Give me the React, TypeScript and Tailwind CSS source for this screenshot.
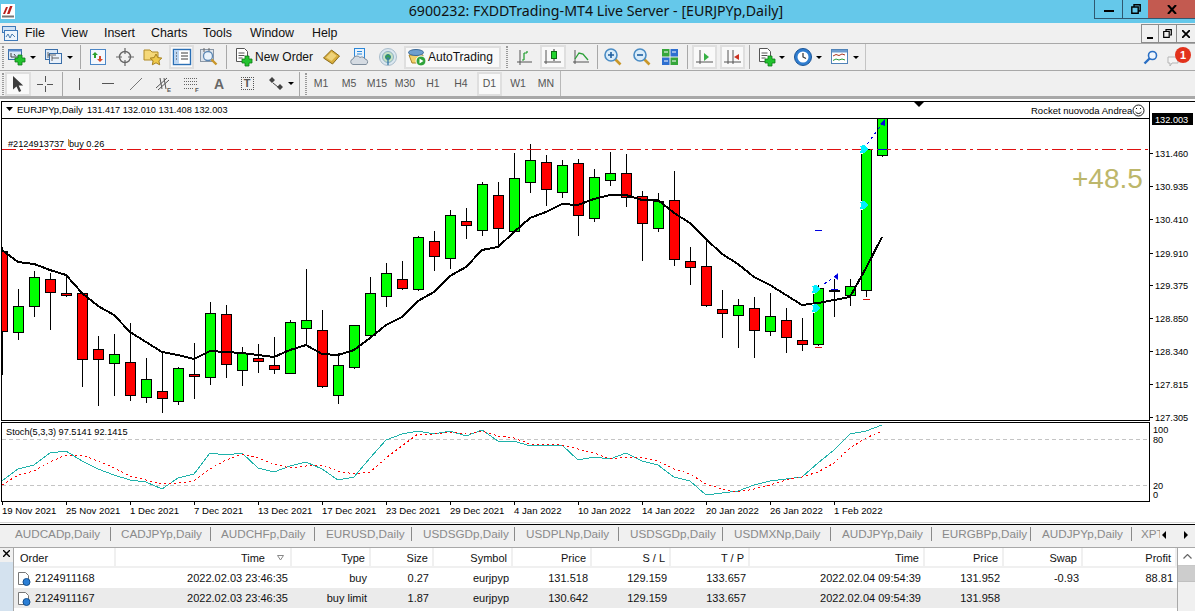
import type { ReactNode } from "react";

type Candle = [number, number, number, number, "g" | "r"];

// hi, body top, body bottom, lo
const candles: Candle[] = [
  [247, 251, 331, 375, "r"], [289, 306, 332, 340, "g"], [271, 277, 306, 317, "g"], [273, 279, 292, 330, "r"],
  [275, 293, 295, 297, "r"], [293, 293, 359, 387, "r"], [336, 349, 359, 406, "r"], [334, 354, 363, 396, "g"],
  [323, 362, 395, 401, "r"], [358, 379, 397, 403, "g"], [352, 391, 398, 413, "r"], [367, 368, 401, 405, "g"],
  [343, 374, 376, 399, "r"], [302, 313, 377, 385, "g"], [305, 314, 364, 378, "r"], [347, 353, 370, 386, "g"],
  [344, 358, 361, 373, "r"], [337, 365, 369, 374, "r"], [320, 322, 373, 374, "g"], [269, 320, 328, 345, "g"],
  [310, 330, 386, 388, "r"], [353, 365, 395, 404, "g"], [325, 325, 367, 369, "g"], [277, 293, 335, 335, "g"],
  [263, 273, 296, 307, "g"], [261, 279, 288, 290, "r"], [236, 237, 289, 291, "g"], [231, 241, 256, 271, "r"],
  [210, 215, 258, 269, "g"], [208, 221, 225, 239, "r"], [182, 184, 230, 236, "g"], [182, 195, 228, 247, "r"],
  [153, 178, 231, 231, "g"], [144, 160, 182, 193, "g"], [155, 162, 189, 206, "r"], [160, 165, 192, 198, "g"],
  [159, 163, 215, 236, "r"], [169, 177, 218, 222, "g"], [152, 173, 180, 186, "g"], [154, 173, 197, 207, "r"],
  [191, 196, 223, 261, "r"], [193, 201, 228, 232, "g"], [171, 200, 259, 266, "r"], [247, 261, 267, 285, "r"],
  [240, 266, 305, 307, "r"], [290, 309, 313, 338, "r"], [299, 305, 315, 348, "g"], [297, 308, 330, 358, "r"],
  [293, 316, 331, 336, "g"], [308, 320, 337, 353, "r"], [318, 340, 344, 351, "r"], [285, 288, 344, 346, "g"],
  [279, 290, 291, 317, "r"], [279, 286, 295, 306, "g"], [149, 149, 290, 297, "g"], [118, 118, 155, 157, "g"],
];

const maLine =
  "2,250 18,262 34,264 50,270 66,275 82,293 98,306 114,315 130,332 146,342 162,352 178,355 194,359 210,351 226,352 242,353 258,355 274,357 290,350 306,345 322,354 338,355 354,350 370,338 386,325 402,317 418,301 434,292 450,276 466,267 482,250 498,247 514,232 530,218 546,212 562,204 578,205 594,199 610,195 626,195 642,200 658,200 674,213 690,223 706,239 722,254 738,264 754,277 770,285 786,295 802,305 818,303 834,300 850,297 866,268 882,237";

const stochMain =
  "2,481 18,469 34,465 50,453 66,451 82,461 98,469 114,475 130,480 146,482 162,489 178,478 194,474 210,453 226,455 242,453 258,468 274,472 290,466 306,462 322,469 338,480 354,477 370,458 386,440 402,434 418,431 434,434 450,431 466,436 482,430 498,441 514,441 530,446 546,445 562,445 578,460 594,457 610,459 626,453 642,461 658,465 674,477 690,481 706,495 722,493 738,491 754,485 770,481 786,479 802,477 818,463 834,450 850,434 866,431 882,425";

const stochSignal =
  "2,485 18,475 34,471 50,462 66,455 82,455 98,461 114,468 130,476 146,480 162,484 178,483 194,481 210,469 226,460 242,454 258,458 274,464 290,468 306,466 322,465 338,471 354,474 370,472 386,458 402,446 418,434 434,434 450,432 466,434 482,431 498,436 514,438 530,444 546,444 562,445 578,449 594,453 610,459 626,457 642,458 658,461 674,469 690,474 706,484 722,489 738,492 754,489 770,485 786,480 802,477 818,472 834,463 850,448 866,438 882,431";

const priceLabels: [string, number][] = [
  ["131.460", 153], ["130.935", 186], ["130.410", 219], ["129.910", 253], ["129.375", 285],
  ["128.850", 318], ["128.340", 351], ["127.815", 384], ["127.305", 417],
];

const dateLabels = [
  "19 Nov 2021", "25 Nov 2021", "1 Dec 2021", "7 Dec 2021", "13 Dec 2021", "17 Dec 2021", "23 Dec 2021",
  "29 Dec 2021", "4 Jan 2022", "10 Jan 2022", "14 Jan 2022", "20 Jan 2022", "26 Jan 2022", "1 Feb 2022",
];

const tabs = [
  { name: "AUDCADp,Daily", cls: "w-[111px] pl-[15px]" },
  { name: "CADJPYp,Daily", cls: "w-[100px] pl-[10px]" },
  { name: "AUDCHFp,Daily", cls: "w-[104px] pl-[10px]" },
  { name: "EURUSD,Daily", cls: "w-[97px] pl-[11px]" },
  { name: "USDSGDp,Daily", cls: "w-[103px] pl-[11px]" },
  { name: "USDPLNp,Daily", cls: "w-[104px] pl-[11px]" },
  { name: "USDSGDp,Daily", cls: "w-[104px] pl-[11px]" },
  { name: "USDMXNp,Daily", cls: "w-[108px] pl-[11px]" },
  { name: "AUDJPYp,Daily", cls: "w-[101px] pl-[11px]" },
  { name: "EURGBPp,Daily", cls: "w-[99px] pl-[10px]" },
  { name: "AUDJPYp,Daily", cls: "w-[101px] pl-[11px]" },
];

const rows = [
  ["2124911168", "2022.02.03 23:46:35", "buy", "0.27", "eurjpyp", "131.518", "129.159", "133.657", "2022.02.04 09:54:39", "131.952", "-0.93", "88.81"],
  ["2124911167", "2022.02.03 23:46:35", "buy limit", "1.87", "eurjpyp", "130.642", "129.159", "133.657", "2022.02.04 09:54:39", "131.958", "", ""],
];

function Slot({ className = "w-[24px]", active, children }: { className?: string; active?: boolean; children?: ReactNode }) {
  return (
    <div
      className={`flex h-[24px] shrink-0 items-center justify-center ${active ? "border-2 border-[#dfdfdf] bg-[#f9f9f9]" : ""} ${className}`}
    >
      {children}
    </div>
  );
}

function Caret() {
  return <div className="h-0 w-0 border-x-[3px] border-t-[3px] border-x-transparent border-t-black" />;
}

function Sep({ className }: { className: string }) {
  return (
    <div className={`flex h-[24px] shrink-0 justify-center ${className}`}>
      <div className="h-full w-px bg-[#a8a8a8]" />
    </div>
  );
}

function Grip({ className = "w-[6px]" }: { className?: string }) {
  return (
    <div className={`flex h-[22px] shrink-0 justify-center ${className}`}>
      <div className="h-full w-[2px] border-x border-dotted border-[#9a9a9a]" />
    </div>
  );
}

function Ico({ children, w = 20, h = 20 }: { children: ReactNode; w?: number; h?: number }) {
  return (
    <svg width={w} height={h} viewBox={`0 0 ${w} ${h}`} fill="none">
      {children}
    </svg>
  );
}

const GreenPlus = ({ x, y }: { x: number; y: number }) => (
  <path
    d={`M${x + 3} ${y}h4v3h3v4h-3v3h-4v-3h-3v-4h3z`}
    fill="#22c32e"
    stroke="#0d7a17"
    strokeWidth="0.8"
  />
);

const NewChartIcon = () => (
  <Ico>
    <rect x="1.5" y="2.5" width="13" height="10" fill="#dbe9f8" stroke="#3a6ea8" />
    <rect x="1.5" y="2.5" width="13" height="2" fill="#5c8ccc" />
    <path d="M4 6v4M4 10h7M7 7l1.5 2" stroke="#444" />
    <GreenPlus x={8} y={8} />
  </Ico>
);

const ProfilesIcon = () => (
  <Ico>
    <rect x="1.5" y="2.5" width="12" height="10" fill="#dbe9f8" stroke="#3a6ea8" />
    <rect x="5.5" y="6.5" width="12" height="10" fill="#e9f1fb" stroke="#3a6ea8" />
    <path d="M4 8h8M4 5v6M8 11h7M8 9v5" stroke="#444" strokeWidth="0.8" />
  </Ico>
);

const MarketIcon = () => (
  <Ico>
    <rect x="2.5" y="2.5" width="15" height="15" fill="#f4f8fd" stroke="#4b86c6" />
    <path d="M7 5l3 3H8v3H6V8H4z" fill="#2da12d" />
    <path d="M12 15l-3-3h2V9h2v3h2z" fill="#d9482b" />
  </Ico>
);

const CrosshairIcon = () => (
  <Ico>
    <circle cx="10" cy="10" r="5.5" stroke="#666" strokeWidth="1.4" />
    <path d="M10 1v6M10 13v6M1 10h6M13 10h6" stroke="#666" strokeWidth="1.2" />
  </Ico>
);

const FolderStarIcon = () => (
  <Ico>
    <path d="M1 3h6l2 2h6v8H1z" fill="#f5d878" stroke="#b08a25" />
    <path d="M13 7l1.8 3.6 4 .5-2.9 2.7.8 4-3.7-2-3.7 2 .8-4-2.9-2.7 4-.5z" fill="#efc94a" stroke="#a5801f" />
  </Ico>
);

const DataWindowIcon = () => (
  <Ico>
    <rect x="1.5" y="2.5" width="17" height="15" fill="#fff" stroke="#2a6fb5" strokeWidth="1.4" />
    <rect x="2" y="3" width="5" height="14" fill="#bcd6f2" />
    <path d="M4 6h1M4 9h1M4 12h1M9 6h7M9 9h7M9 12h7" stroke="#3c3c3c" />
  </Ico>
);

const TesterIcon = () => (
  <Ico>
    <rect x="1.5" y="2.5" width="13" height="12" fill="#dde3ea" stroke="#8a97a6" />
    <path d="M5 1v4M10 1v4" stroke="#666" />
    <circle cx="9" cy="9" r="4.5" fill="#eaf3fb" stroke="#5e88b4" strokeWidth="1.3" />
    <path d="M12.5 12.5l5 5" stroke="#c9972a" strokeWidth="2.4" />
  </Ico>
);

const NewOrderIcon = () => (
  <Ico w={18} h={20}>
    <path d="M1.5 1.5h8l3 3v10h-11z" fill="#fff" stroke="#555" />
    <path d="M3.5 6h6M3.5 8.5h6M3.5 11h4" stroke="#555" />
    <GreenPlus x={7} y={9} />
  </Ico>
);

const GoldIcon = () => (
  <Ico>
    <path d="M1.5 11l8-8 8 6-7 8z" fill="#d8ae3d" stroke="#8a6a18" />
    <path d="M4 10.5l5.5-5.5 5 3.8-5 5.3z" fill="#efd37a" />
  </Ico>
);

const CloudIcon = () => (
  <Ico>
    <rect x="4.5" y="1.5" width="10" height="11" fill="#e9f3fc" stroke="#2b87d8" />
    <path d="M7 4.5h5M7 7h5" stroke="#2b87d8" />
    <path d="M3 17.5a2.8 2.8 0 0 1 0-5.5 4 4 0 0 1 7-1.5 3.4 3.4 0 0 1 5 1.5 2.9 2.9 0 0 1 1 5.5z" fill="#d5dbe2" stroke="#7e8d9c" />
  </Ico>
);

const SignalIcon = () => (
  <Ico>
    <circle cx="10" cy="10" r="8.5" fill="#dbe7ef" stroke="#a9bdcc" />
    <circle cx="10" cy="10" r="5.5" fill="#c6e2c2" stroke="#8db0c4" />
    <circle cx="10" cy="10" r="2.5" fill="#37a34a" stroke="#2b7e8f" />
    <path d="M10 10v8" stroke="#3c7da8" strokeWidth="1.4" />
  </Ico>
);

const AutoIcon = () => (
  <Ico w={20} h={20}>
    <path d="M2 8h14l-2 8H5z" fill="#f2d068" stroke="#a8862a" />
    <ellipse cx="9" cy="5.5" rx="7.5" ry="3" fill="#6e9fce" stroke="#3c6a98" />
    <circle cx="14" cy="14" r="5" fill="#2fa23a" stroke="#fff" />
    <path d="M12.5 11.5l4 2.5-4 2.5z" fill="#fff" />
  </Ico>
);

const BarChartIcon = () => (
  <Ico>
    <path d="M5 3v12M2 15h15M5 18v-3" stroke="#555" />
    <path d="M9 13V6M9 13H7M9 6h3M12 6V4" stroke="#1c9c2a" strokeWidth="1.2" />
  </Ico>
);

const CandleIcon = () => (
  <Ico>
    <path d="M3 3v14M1 15h17" stroke="#555" />
    <path d="M11 2v12" stroke="#333" />
    <rect x="8.5" y="4.5" width="5" height="7" fill="#22d32e" stroke="#0b6e14" />
  </Ico>
);

const LineChartIcon = () => (
  <Ico>
    <path d="M4 3v14M2 15h16" stroke="#555" />
    <path d="M4 12l4-6 4 1 5 6" stroke="#2aa037" strokeWidth="1.3" />
  </Ico>
);

const ZoomIcon = ({ plus }: { plus?: boolean }) => (
  <Ico>
    <path d="M11 11l6.5 6.5" stroke="#c9972a" strokeWidth="2.6" />
    <circle cx="8" cy="8" r="6" fill="#d9ecfa" stroke="#4a8cc4" strokeWidth="1.6" />
    <path d={plus ? "M5 8h6M8 5v6" : "M5 8h6"} stroke="#1f5f9f" strokeWidth="1.6" />
  </Ico>
);

const TileIcon = () => (
  <Ico w={18} h={18}>
    <rect x="1" y="1" width="7.5" height="7.5" fill="#35a63a" />
    <rect x="9.5" y="1" width="7.5" height="7.5" fill="#2e6fd0" />
    <rect x="1" y="9.5" width="7.5" height="7.5" fill="#2e6fd0" />
    <rect x="9.5" y="9.5" width="7.5" height="7.5" fill="#35a63a" />
    <path d="M3 4h4M11 4h4M3 13h4M11 13h4" stroke="#fff" />
  </Ico>
);

const ShiftIcon = () => (
  <Ico>
    <path d="M5 3v14M1 15h17" stroke="#555" />
    <path d="M9 6l5 4-5 4z" fill="#36b044" />
  </Ico>
);

const AutoScrollIcon = () => (
  <Ico>
    <path d="M5 3v14M1 15h17M10 3v14" stroke="#555" />
    <path d="M16 7l-5 3 5 3z" fill="#cc3322" />
  </Ico>
);

const ClockIcon = () => (
  <Ico>
    <circle cx="10" cy="10" r="8.5" fill="#2f7dd0" stroke="#1c5596" />
    <circle cx="10" cy="10" r="5.5" fill="#fff" />
    <path d="M10 6v4l3 1.5" stroke="#333" strokeWidth="1.2" />
  </Ico>
);

const TemplateIcon = () => (
  <Ico>
    <rect x="1.5" y="2.5" width="16" height="14" fill="#fff" stroke="#5083b8" />
    <rect x="2" y="3" width="15" height="2.5" fill="#6d9ed0" />
    <path d="M3 9l3-1.5 3 1 3-1.5 3 1" stroke="#a8371f" />
    <path d="M3 13.5l3-1.5 3 1 3-1 3 1" stroke="#2a9a37" />
  </Ico>
);

const CursorIcon = () => (
  <Ico w={14} h={18}>
    <path d="M2 1v13.5l3.5-3 2.5 5.5 2.2-1-2.5-5.4h4.5z" fill="#3c3c3c" />
  </Ico>
);

const ToolText = ({ children }: { children: string }) => (
  <span className="text-[10.5px] leading-none text-[#555]">{children}</span>
);

function TitleBar() {
  return (
    <div className="relative flex h-[23px] shrink-0 items-center bg-[#65c8ea]">
      <svg width="14" height="15" viewBox="0 0 14 15" className="ml-px shrink-0">
        <rect width="14" height="15" fill="#fff" />
        <path d="M2 10l3-7h2l-3 7zM6 10l3-8h2.5l-3 8z" fill="#b9201c" />
        <rect x="1" y="11.5" width="12" height="2" fill="#777" />
      </svg>
      <div className="flex-1 pl-[83px] text-center text-[14.2px] leading-none text-[#111] [font-family:'Noto_Sans',sans-serif]">
        6900232: FXDDTrading-MT4 Live Server - [EURJPYp,Daily]
      </div>
      <div className="mb-[4px] flex h-[19px] shrink-0 self-start">
        <div className="flex w-[28px] items-center justify-center border-b border-l border-[#2f5870]">
          <div className="mt-[4px] h-[2px] w-[10px] bg-black" />
        </div>
        <div className="flex w-[26px] items-center justify-center border-b border-l border-[#2f5870]">
          <svg width="10" height="10" viewBox="0 0 10 10" fill="none" stroke="#000" strokeWidth="1.4">
            <path d="M3 2.5V.8h6.2V7H7.5M.8 3h6.4v6.2H.8z" />
          </svg>
        </div>
        <div className="flex w-[47px] items-center justify-center border-b border-[#2f5870] bg-[#c35a50]">
          <svg width="10" height="9" viewBox="0 0 10 9" stroke="#000" strokeWidth="2">
            <path d="M1 0l8 9M9 0L1 9" />
          </svg>
        </div>
      </div>
    </div>
  );
}

function MenuBar() {
  return (
    <div className="flex h-[21px] shrink-0 items-center border-y border-[#a8a8a8] border-t-transparent bg-[#f0f0f0] text-[12.4px] text-[#111]">
      <svg width="16" height="15" viewBox="0 0 16 15" className="ml-[2px] shrink-0" fill="none">
        <rect x="0.5" y="0.5" width="13" height="6" fill="#cfe2f6" stroke="#3f79b8" />
        <rect x="2.5" y="4.5" width="13" height="10" fill="#eef5fc" stroke="#3f79b8" />
        <path d="M4 11l2-3 2 4 2-4 3 3" stroke="#4a7db0" />
      </svg>
      <span className="ml-[7px] w-[36px]">File</span>
      <span className="w-[43px]">View</span>
      <span className="w-[47px]">Insert</span>
      <span className="w-[52px]">Charts</span>
      <span className="w-[47px]">Tools</span>
      <span className="w-[62px]">Window</span>
      <span>Help</span>
      <div className="ml-auto flex h-[19px]">
        <div className="flex w-[18px] items-end justify-center border border-[#8c8c8c] pb-[3px]">
          <div className="h-[2px] w-[6px] bg-black" />
        </div>
        <div className="flex w-[18px] items-center justify-center border-y border-r border-[#8c8c8c]">
          <svg width="9" height="9" viewBox="0 0 9 9" fill="none" stroke="#000" strokeWidth="1.2">
            <path d="M3 2V.7h5.3V6H7M.7 2.5H6.2V8.3H.7z" />
          </svg>
        </div>
        <div className="flex w-[18px] items-center justify-center border-y border-[#8c8c8c]">
          <svg width="8" height="8" viewBox="0 0 8 8" stroke="#000" strokeWidth="1.8">
            <path d="M0 0l8 8M8 0L0 8" />
          </svg>
        </div>
      </div>
    </div>
  );
}

function MainToolbar() {
  return (
    <div className="flex h-[27px] shrink-0 items-center border-b border-[#a8a8a8] bg-[#f0f0f0]">
      <div className="flex h-full w-[866px] shrink-0 items-center border-r border-[#c4c4c4]">
        <Grip className="w-[5px]" />
        <Slot><NewChartIcon /></Slot>
        <Slot className="w-[8px]"><Caret /></Slot>
        <Slot className="ml-[5px] w-[24px]"><ProfilesIcon /></Slot>
        <Slot className="w-[8px]"><Caret /></Slot>
        <Sep className="w-[12px]" />
        <Slot><MarketIcon /></Slot>
        <Slot className="ml-[3px] w-[24px]"><CrosshairIcon /></Slot>
        <Slot className="ml-[4px] w-[24px]"><FolderStarIcon /></Slot>
        <Slot className="ml-[4px] w-[25px]" active><DataWindowIcon /></Slot>
        <Slot className="ml-[3px] w-[24px]"><TesterIcon /></Slot>
        <Sep className="w-[10px]" />
        <Slot className="ml-[3px] w-[20px]"><NewOrderIcon /></Slot>
        <span className="ml-px w-[60px] text-[12px] text-[#111]">New Order</span>
        <Slot className="ml-[5px] w-[24px]"><GoldIcon /></Slot>
        <Slot className="ml-[4px] w-[24px]"><CloudIcon /></Slot>
        <Slot className="ml-[4px] w-[24px]"><SignalIcon /></Slot>
        <div className="ml-[4px] flex h-[23px] w-[97px] shrink-0 items-center gap-px border-2 border-[#dfdfdf] bg-[#f9f9f9] pl-px text-[12px] text-[#111]">
          <AutoIcon />
          <span>AutoTrading</span>
        </div>
        <Grip className="ml-[3px] w-[6px]" />
        <Slot className="ml-[3px] w-[24px]"><BarChartIcon /></Slot>
        <Slot className="ml-[3px] w-[26px]" active><CandleIcon /></Slot>
        <Slot className="ml-[3px] w-[24px]"><LineChartIcon /></Slot>
        <Sep className="w-[8px]" />
        <Slot><ZoomIcon plus /></Slot>
        <Slot className="ml-[5px] w-[24px]"><ZoomIcon /></Slot>
        <Slot className="ml-[4px] w-[24px]"><TileIcon /></Slot>
        <Sep className="w-[10px]" />
        <Slot className="w-[25px]" active><ShiftIcon /></Slot>
        <Slot className="ml-[3px] w-[25px]" active><AutoScrollIcon /></Slot>
        <Sep className="w-[8px]" />
        <Slot className="ml-[2px] w-[24px]">
          <NewOrderIcon />
        </Slot>
        <Slot className="w-[5px]"><Caret /></Slot>
        <Slot className="ml-[7px] w-[24px]"><ClockIcon /></Slot>
        <Slot className="w-[8px]"><Caret /></Slot>
        <Slot className="ml-[5px] w-[24px]"><TemplateIcon /></Slot>
        <Slot className="w-[8px]"><Caret /></Slot>
      </div>
      <div className="ml-auto flex items-center gap-[9px] pr-[4px]">
        <svg width="15" height="15" viewBox="0 0 15 15" fill="none">
          <circle cx="9.5" cy="5.5" r="4" fill="#eef5fd" stroke="#2a6fc4" strokeWidth="1.6" />
          <path d="M6.5 8.5L1.5 13.5" stroke="#2a6fc4" strokeWidth="2.4" />
        </svg>
        <div className="relative h-[20px] w-[24px]">
          <svg width="12" height="12" viewBox="0 0 12 12" className="absolute bottom-0 left-0">
            <path d="M1 2h10v6H5l-2 3V8H1z" fill="#f4f4f4" stroke="#b5b5b5" />
          </svg>
          <div className="absolute right-0 top-0 flex h-[16px] w-[16px] items-center justify-center rounded-full bg-[#e2321c] text-[11px] font-bold leading-none text-white">
            1
          </div>
        </div>
      </div>
    </div>
  );
}

function DrawToolbar() {
  const tf = ["M1", "M5", "M15", "M30", "H1", "H4"];
  return (
    <div className="flex h-[27px] shrink-0 items-center border-b-[2px] border-[#a8a8a8] bg-[#f0f0f0] [font-family:'Liberation_Sans',sans-serif]">
      <Grip className="w-[5px]" />
      <Slot className="w-[26px]" active><CursorIcon /></Slot>
      <Slot className="ml-[2px] w-[24px]">
        <svg width="16" height="16" viewBox="0 0 16 16" stroke="#555"><path d="M8.5 0v6M8.5 10v6M0 8.5h6M10 8.5h6" /></svg>
      </Slot>
      <Sep className="w-[10px]" />
      <Slot><div className="h-[12px] w-px bg-[#555]" /></Slot>
      <Slot className="ml-[5px] w-[24px]"><div className="h-px w-[12px] bg-[#555]" /></Slot>
      <Slot className="ml-[4px] w-[24px]">
        <svg width="14" height="14" viewBox="0 0 14 14" stroke="#777"><path d="M1 13L13 1" /></svg>
      </Slot>
      <Slot className="ml-[4px] w-[24px]">
        <svg width="18" height="16" viewBox="0 0 18 16" fill="none" stroke="#555">
          <path d="M1 12L12 2M3 14L14 4M5 2l2 11M9 2l2 11" />
          <text x="12" y="16" fontSize="6" fontWeight="700" fill="#555" stroke="none">E</text>
        </svg>
      </Slot>
      <Slot className="ml-[4px] w-[24px]">
        <svg width="18" height="16" viewBox="0 0 18 16" fill="none" stroke="#666" strokeDasharray="1 1">
          <path d="M1 2.5h13M1 5.5h13M1 8.5h13M1 12.5h10" />
          <text x="12" y="16" fontSize="6" fontWeight="700" fill="#555" stroke="none" strokeDasharray="0">F</text>
        </svg>
      </Slot>
      <Slot className="ml-[3px] w-[24px]"><span className="text-[14px] font-bold leading-none text-[#666]">A</span></Slot>
      <Slot className="ml-[4px] w-[24px]">
        <div className="flex h-[13px] w-[13px] items-center justify-center border border-dotted border-[#555] text-[11px] font-bold leading-none text-[#555]">T</div>
      </Slot>
      <Slot className="ml-[5px] w-[24px]">
        <svg width="15" height="14" viewBox="0 0 15 14" fill="#444"><path d="M3 0l3 3-3 3-3-3zM11 7l3 3-3 3-3-3z" /><path d="M4 6l5 4" stroke="#444" /></svg>
      </Slot>
      <Slot className="w-[6px]"><Caret /></Slot>
      <Sep className="w-[10px]" />
      <Grip className="w-[3px]" />
      {tf.map((t) => (
        <Slot key={t} className="w-[28px]"><ToolText>{t}</ToolText></Slot>
      ))}
      <Slot className="ml-[2px] w-[25px]" active><ToolText>D1</ToolText></Slot>
      <Slot className="ml-[2px] w-[28px]"><ToolText>W1</ToolText></Slot>
      <Slot className="w-[28px]"><ToolText>MN</ToolText></Slot>
      <div className="h-full w-px bg-[#b8b8b8]" />
    </div>
  );
}

function Diamond({ x, y }: { x: number; y: number }) {
  return (
    <g shapeRendering="crispEdges">
      <path d={`M${x - 4} ${y - 4}h4l4 4-4 4h-4l1-4z`} fill="#00f0ff" />
      <path d={`M${x - 4} ${y + 4}h3M${x - 4} ${y - 4}h2`} stroke="#fff" />
    </g>
  );
}

function Chart() {
  return (
    <svg width="1195" height="426" viewBox="0 98 1195 426" className="block shrink-0 bg-white" fontFamily="'Liberation Sans', sans-serif">
      <clipPath id="pane">
        <rect x="2" y="119" width="1147" height="301" />
      </clipPath>

      <g clipPath="url(#pane)" shapeRendering="crispEdges">
        {candles.map(([hi, top, bot, lo, c], i) => {
          const x = 2 + i * 16;
          return (
            <g key={i}>
              <line x1={x + 0.5} x2={x + 0.5} y1={hi} y2={lo} stroke="#000" />
              {i === 52 ? (
                <rect x={x - 5} y={top} width="11" height="2" fill="#000" />
              ) : (
                <rect x={x - 4.5} y={top + 0.5} width="10" height={bot - top} fill={c === "g" ? "#00ff00" : "#ff0000"} stroke="#000" />
              )}
            </g>
          );
        })}
        <line x1="2" x2="1149" y1="149.5" y2="149.5" stroke="#e01010" strokeDasharray="14 4 3 4" />
        <polyline points={maLine} fill="none" stroke="#000" strokeWidth="2" />
        <path d="M815 230.5h7M831 289.5h7M878 149.5h9" stroke="#0000e0" />
        <path d="M815 347.5h7M863 299.5h7" stroke="#e01010" />
        <path d="M824 284L837 275M864 149L883 122" stroke="#0000e0" strokeDasharray="3 3" />
      </g>
      <path d="M834 277l4-4v7zM880 124l5-5v7z" fill="#0000e0" />
      <Diamond x={816} y={289} />
      <Diamond x={816} y={308} />
      <Diamond x={864} y={205} />
      <Diamond x={864} y={149} />

      <g shapeRendering="crispEdges">
        <line x1="0" x2="1195" y1="98.5" y2="98.5" stroke="#a8a8a8" />
        <line x1="1" x2="1195" y1="101.5" y2="101.5" stroke="#000" />
        <line x1="1" x2="1149" y1="118.5" y2="118.5" stroke="#000" />
        <line x1="1.5" x2="1.5" y1="101" y2="421" stroke="#000" />
        <line x1="1" x2="1149" y1="420.5" y2="420.5" stroke="#000" />
        <line x1="1.5" x2="1.5" y1="422" y2="502" stroke="#000" />
        <line x1="1" x2="1149" y1="422.5" y2="422.5" stroke="#000" />
        <line x1="1" x2="1149" y1="501.5" y2="501.5" stroke="#000" />
        <line x1="1149.5" x2="1149.5" y1="101" y2="421" stroke="#000" />
        <line x1="1149.5" x2="1149.5" y1="422" y2="502" stroke="#000" />
        <line x1="2" x2="1149" y1="439.5" y2="439.5" stroke="#c4c4c4" strokeDasharray="4 3" />
        <line x1="2" x2="1149" y1="485.5" y2="485.5" stroke="#c4c4c4" strokeDasharray="4 3" />
        {priceLabels.map(([, y]) => (
          <line key={y} x1="1149" x2="1153" y1={y + 0.5} y2={y + 0.5} stroke="#000" />
        ))}
        {dateLabels.map((_, i) => (
          <line key={i} x1={2.5 + i * 64} x2={2.5 + i * 64} y1="501" y2="505" stroke="#000" />
        ))}
        <polyline points={stochMain} fill="none" stroke="#20b2aa" />
        <polyline points={stochSignal} fill="none" stroke="#ff0000" strokeDasharray="2 3" />
      </g>

      <path d="M6 107h7l-3.5 4z" fill="#000" />
      <text x="17" y="113" fontSize="9.5" fill="#000">EURJPYp,Daily</text>
      <text x="87" y="113" fontSize="9.2" fill="#000">131.417 132.010 131.408 132.003</text>
      <path d="M914 102h10l-5 5z" fill="#000" />
      <text x="1031" y="114" fontSize="9.5" fill="#000">Rocket nuovoda Andrea</text>
      <g fill="none" stroke="#000" strokeWidth="0.9">
        <circle cx="1138.5" cy="110.5" r="5.5" />
        <path d="M1135.5 112c1.5 2 4.5 2 6 0" />
      </g>
      <path d="M1136.5 108v1M1140.5 108v1" stroke="#000" />

      <text x="8" y="147" fontSize="9.2" fill="#000">#2124913737</text>
      <path d="M68.5 139v7" stroke="#c08a3a" shapeRendering="crispEdges" />
      <text x="69" y="147" fontSize="9.2" fill="#000">buy 0.26</text>
      <text x="1072" y="188" fontSize="28" fill="#bdb76b">+48.5</text>

      <rect x="1152" y="113" width="41" height="12" fill="#000" />
      <text x="1155" y="122.5" fontSize="9.2" fill="#fff">132.003</text>
      {priceLabels.map(([t, y]) => (
        <text key={t} x="1155" y={y + 3.5} fontSize="9.2" fill="#000">{t}</text>
      ))}

      <text x="6" y="435" fontSize="9.2" fill="#000">Stoch(5,3,3) 97.5141 92.1415</text>
      <text x="1153" y="433" fontSize="9.2" fill="#000">100</text>
      <text x="1153" y="443" fontSize="9.2" fill="#000">80</text>
      <text x="1153" y="489" fontSize="9.2" fill="#000">20</text>
      <text x="1153" y="498" fontSize="9.2" fill="#000">0</text>
      {dateLabels.map((d, i) => (
        <text key={d} x={2 + i * 64} y="514" fontSize="9.6" fill="#000">{d}</text>
      ))}
      <line x1="0" x2="1195" y1="522.5" y2="522.5" stroke="#d4d4d4" shapeRendering="crispEdges" />
    </svg>
  );
}

function TabBar() {
  return (
    <div className="relative flex h-[24px] shrink-0 items-start overflow-hidden border-y border-black border-b-[#a8a8a8] bg-[#f0f0f0] pt-[2px] text-[11.7px] text-[#8a8a8a]">
      {tabs.map((t, i) => (
        <div key={i} className={`flex h-[14px] shrink-0 items-center border-r border-[#8a8a8a] ${t.cls}`}>
          {t.name}
        </div>
      ))}
      <div className="flex h-[14px] flex-1 items-center pl-[9px]">XPT</div>
      <div className="absolute right-0 top-0 flex h-[20px] w-[35px] items-center justify-between bg-[#f0f0f0] pl-[2px] pr-[7px]">
        <div className="h-0 w-0 border-y-[4px] border-r-[4px] border-y-transparent border-r-black" />
        <div className="h-0 w-0 border-y-[4px] border-l-[4px] border-y-transparent border-l-black" />
      </div>
    </div>
  );
}

const gridCols =
  "grid grid-cols-[102px_176px_79px_63px_79px_79px_79px_79px_175px_79px_79px_94px]";

function HeadCell({ children, className = "" }: { children?: ReactNode; className?: string }) {
  return <div className={`flex items-center border-r-[2px] border-[#f0f0f0] pt-[2px] ${className}`}>{children}</div>;
}

function Terminal() {
  return (
    <div className="flex min-h-0 flex-1 bg-white text-[11px] text-[#111]">
      <div className="flex w-[13px] shrink-0 flex-col bg-[#f0f0f0]">
        <div className="flex h-[14px] items-start justify-center pt-[2px]">
          <svg width="7" height="7" viewBox="0 0 7 7" stroke="#000" strokeWidth="1.4"><path d="M0 0l7 7M7 0L0 7" /></svg>
        </div>
        <div className="flex-1 bg-[#d4e2ef]" />
      </div>
      <div className="flex-1 border-l border-[#a8a8a8]">
        <div className={`${gridCols} h-[20px] border-b-[2px] border-[#f0f0f0] bg-white`}>
          <HeadCell className="pl-[6px]">Order</HeadCell>
          <HeadCell className="justify-end gap-[12px] pr-[6px]">
            Time
            <svg width="7" height="6" viewBox="0 0 7 6" fill="none" stroke="#888"><path d="M.5.5h6L3.5 5z" /></svg>
          </HeadCell>
          <HeadCell className="justify-end pr-[4px]">Type</HeadCell>
          <HeadCell className="justify-end pr-[4px]">Size</HeadCell>
          <HeadCell className="justify-end pr-[4px]">Symbol</HeadCell>
          <HeadCell className="justify-end pr-[4px]">Price</HeadCell>
          <HeadCell className="justify-end pr-[4px]">S / L</HeadCell>
          <HeadCell className="justify-end pr-[4px]">T / P</HeadCell>
          <HeadCell className="justify-end pr-[4px]">Time</HeadCell>
          <HeadCell className="justify-end pr-[4px]">Price</HeadCell>
          <HeadCell className="justify-end pr-[4px]">Swap</HeadCell>
          <HeadCell className="justify-end pr-[4px]">Profit</HeadCell>
        </div>
        {rows.map((r, i) => (
          <div key={r[0]} className={`${gridCols} h-[20px] items-center ${i === 1 ? "bg-[#ebebeb]" : "bg-white"}`}>
            <div className="flex items-center gap-[4px] pl-[3px]">
              <svg width="14" height="15" viewBox="0 0 14 15" fill="none" className="shrink-0">
                <path d="M1.5 1.5h7l3 3v9h-10z" fill="#fff" stroke="#777" />
                <circle cx="9.5" cy="11" r="3.5" fill="#2b7fd6" stroke="#14508e" />
              </svg>
              {r[0]}
            </div>
            <div className="pr-[4px] text-right">{r[1]}</div>
            <div className="pr-[4px] text-right">{r[2]}</div>
            <div className="pr-[5px] text-right">{r[3]}</div>
            <div className="pr-[4px] text-right">{r[4]}</div>
            <div className="pr-[4px] text-right">{r[5]}</div>
            <div className="pr-[4px] text-right">{r[6]}</div>
            <div className="pr-[4px] text-right">{r[7]}</div>
            <div className="pr-[4px] text-right">{r[8]}</div>
            <div className="pr-[4px] text-right">{r[9]}</div>
            <div className="pr-[4px] text-right">{r[10]}</div>
            <div className="pr-[4px] text-right">{r[11]}</div>
          </div>
        ))}
      </div>
      <div className="flex w-[19px] shrink-0 flex-col border-l border-[#a8a8a8] bg-[#f0f0f0]">
        <div className="flex h-[18px] items-center justify-center border-b border-[#c8c8c8] bg-white">
          <svg width="9" height="5" viewBox="0 0 9 5" fill="none" stroke="#666" strokeWidth="1.2"><path d="M.5 4.5l4-4 4 4" /></svg>
        </div>
        <div className="h-[16px] border-b border-[#c0c0c0] bg-[#cdcdcd]" />
      </div>
    </div>
  );
}

export default function App() {
  return (
    <div className="flex h-[611px] w-[1195px] flex-col overflow-hidden bg-[#f0f0f0] [font-family:'Liberation_Sans',sans-serif]">
      <TitleBar />
      <MenuBar />
      <MainToolbar />
      <DrawToolbar />
      <Chart />
      <TabBar />
      <Terminal />
    </div>
  );
}
